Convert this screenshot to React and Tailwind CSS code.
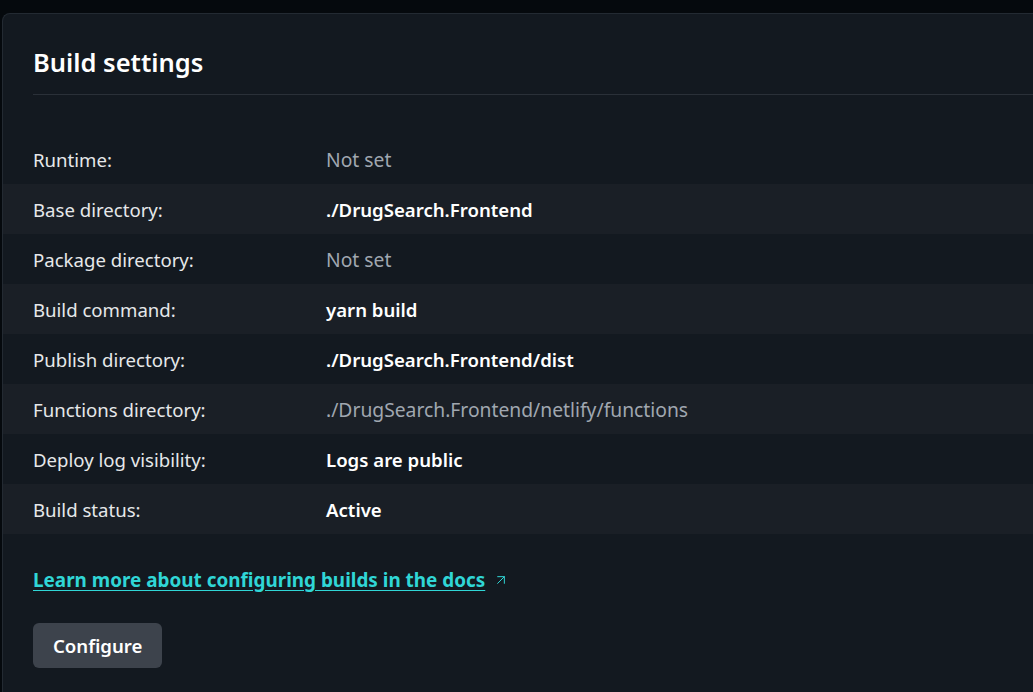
import { ArrowUpRight } from "lucide-react";

const rows = [
  { label: "Runtime:", value: "Not set", muted: true },
  { label: "Base directory:", value: "./DrugSearch.Frontend" },
  { label: "Package directory:", value: "Not set", muted: true },
  { label: "Build command:", value: "yarn build" },
  { label: "Publish directory:", value: "./DrugSearch.Frontend/dist" },
  { label: "Functions directory:", value: "./DrugSearch.Frontend/netlify/functions", muted: true },
  { label: "Deploy log visibility:", value: "Logs are public" },
  { label: "Build status:", value: "Active" },
];

function SettingRow({ label, value, muted, striped }) {
  return (
    <div className={`flex items-center h-[50px] px-[30px] pt-[2px] ${striped ? "bg-[#1a1f26]" : ""}`}>
      <div className="w-[293px] text-[#e6e8ea]">{label}</div>
      <div className={muted ? "text-[#a0a7b0] text-[19.3px]" : "font-semibold text-white"}>{value}</div>
    </div>
  );
}

export default function App() {
  return (
    <div className="min-h-[692px] bg-[#05090d] pt-[13px] pl-[2px] font-['Noto_Sans',sans-serif] text-[18.6px] leading-[26px] overflow-hidden">
      <div className="min-h-[679px] bg-[#131920] border-l border-t border-[#232a32] rounded-tl-lg">
        <div className="pl-[30px] pt-[30px]">
          <h2 className="text-[25.5px] font-semibold text-white leading-[36px] pb-[14px] border-b border-[#2a3038]">
            Build settings
          </h2>
        </div>
        <div className="mt-[39px]">
          {rows.map((r, i) => (
            <SettingRow key={r.label} {...r} striped={i % 2 === 1} />
          ))}
        </div>
        <div className="px-[30px] mt-[33px] flex items-center gap-[8px]">
          <a href="#" className="text-[#30d6d6] font-bold text-[18.9px] underline underline-offset-[3px]">
            Learn more about configuring builds in the docs
          </a>
          <ArrowUpRight className="w-[16px] h-[16px] text-[#30d6d6]" strokeWidth={1.5} />
        </div>
        <div className="px-[30px] mt-[30px]">
          <button className="h-[45px] px-[20px] rounded-md bg-[#3d434c] text-white font-semibold text-[18.6px]">
            Configure
          </button>
        </div>
      </div>
    </div>
  );
}
